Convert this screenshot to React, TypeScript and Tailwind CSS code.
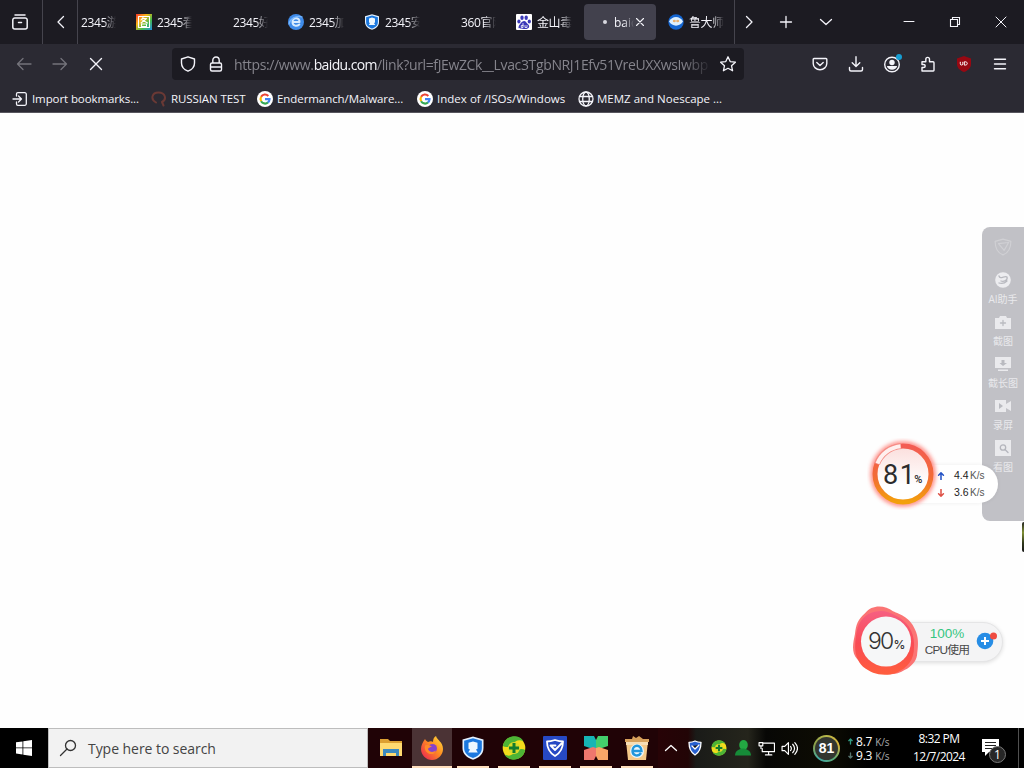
import React from 'react';

const UI = "font-['Open_Sans','Noto_Sans_CJK_SC',sans-serif]";

type IconProps = { className?: string; children: React.ReactNode; box?: string; sw?: number };

function Ico({ className = '', children, box = '0 0 16 16', sw = 1.3 }: IconProps) {
  return (
    <svg viewBox={box} className={`shrink-0 ${className}`} fill="none" stroke="currentColor" strokeWidth={sw} strokeLinecap="round" strokeLinejoin="round">
      {children}
    </svg>
  );
}

function Photos() {
  return (
    <Ico className="size-4" sw={1.1}>
      <defs>
        <linearGradient id="rainbow" x1="0" y1="0" x2="1" y2="1">
          <stop offset="0" stopColor="#f3342b" />
          <stop offset=".35" stopColor="#f9b416" />
          <stop offset=".65" stopColor="#45ba48" />
          <stop offset="1" stopColor="#218fe5" />
        </linearGradient>
      </defs>
      <rect width="16" height="16" stroke="none" fill="url(#rainbow)" />
      <path stroke="#fff" d="M2.500 2.500h11v11h-11zM7 3.500 5 6M6.500 4.500h4L5 9M6.500 6l5 3M5.500 10h5v2.500h-5z" />
    </Ico>
  );
}

function BlueE() {
  return (
    <Ico className="size-4">
      <circle cx="8" cy="8" r="8" fill="#3f8be9" stroke="none" />
      <path stroke="#d7ebff" strokeWidth="2" d="M4.500 8h7C11.500 3 4.500 3 4.500 8c0 4.300 4.500 4.500 6.800 2.500" />
      <path stroke="#78b8ff" d="M1 10C2 5 8 1 14 3" />
    </Ico>
  );
}

function ShieldStar({ className = 'size-4' }: { className?: string }) {
  return (
    <Ico className={className}>
      <path d="M8 .3 15 2.300V8c0 4.300-3.200 6.600-7 7.800C4.200 14.600 1 12.300 1 8V2.300z" fill="#e4f2ff" stroke="none" />
      <path d="M8 1.500 13.900 3.200V8c0 3.600-2.600 5.500-5.900 6.600C4.700 13.500 2.100 11.600 2.100 8V3.200z" fill="#1b78df" stroke="none" />
      <path d="M5 4.500 8 3.600l3 .9v4L10 9l1.200 2H4.800L6 9l-1-.5z" fill="#eef8ff" stroke="none" />
    </Ico>
  );
}

function Paw() {
  return (
    <Ico className="size-4">
      <rect width="16" height="16" rx="1" fill="#fff" stroke="none" />
      <g fill="#3a38b8" stroke="none">
        <ellipse cx="2.900" cy="7.500" rx="1.600" ry="2.100" />
        <ellipse cx="6" cy="3.700" rx="1.700" ry="2.300" />
        <ellipse cx="10.200" cy="3.700" rx="1.700" ry="2.300" />
        <ellipse cx="13.300" cy="7.500" rx="1.600" ry="2.100" />
        <path d="M8 7c2 0 2.500 2 4 3.300C14.500 12.500 13 15.500 8 15s-6.500 0-5-3.500C4.500 9.500 6 7 8 7z" />
      </g>
      <path stroke="#fff" strokeWidth=".8" d="M7 9.500v4H5.300v-2H7M9 11.500v2h2v-2" />
    </Ico>
  );
}

function Master() {
  return (
    <Ico className="size-4">
      <circle cx="8" cy="8" r="7.700" fill="#1466d2" stroke="none" />
      <path d="M1 7.500C4 1.500 12 1.500 15 7.500c-3 5.500-11 5.500-14 0z" fill="#dcefff" stroke="none" />
      <ellipse cx="6.300" cy="7" rx="1.500" ry="1.300" fill="#e9b070" stroke="none" />
      <ellipse cx="9.700" cy="7" rx="1.500" ry="1.300" fill="#e9b070" stroke="none" />
    </Ico>
  );
}

function GoogleG() {
  return (
    <svg viewBox="0 0 16 16" className="size-4 shrink-0">
      <circle cx="8" cy="8" r="8" fill="#fff" />
      <g fill="none" strokeWidth="2.200">
        <path stroke="#ea4335" d="M4.100 5.800A4.500 4.500 0 0 1 11.300 4.900" />
        <path stroke="#fbbc05" d="M4.200 10.300A4.500 4.500 0 0 1 4.200 5.700" />
        <path stroke="#34a853" d="M11 11.400A4.500 4.500 0 0 1 4.100 10.200" />
        <path stroke="#4285f4" d="M8 8.200h4.500A4.500 4.500 0 0 1 10.900 11.500" />
      </g>
    </svg>
  );
}

const tabs: { icon?: React.ReactNode; title: string; active?: boolean }[] = [
  { title: '2345游' },
  { icon: <Photos />, title: '2345看' },
  { title: '2345好' },
  { icon: <BlueE />, title: '2345加' },
  { icon: <ShieldStar />, title: '2345安' },
  { title: '360官网' },
  { icon: <Paw />, title: '金山毒' },
  { title: 'baidu', active: true },
  { icon: <Master />, title: '鲁大师' },
];

function Tab({ icon, title, active }: { icon?: React.ReactNode; title: string; active?: boolean }) {
  if (active) {
    return (
      <div className="w-[76px] shrink-0 px-0.5">
        <div className="flex h-9 w-[72px] items-center rounded bg-[#42414d] pl-[19px]">
          <i className="mr-[7px] size-1 shrink-0 rounded-full bg-[#d8d8df]" />
          <span className="w-5 overflow-hidden pt-px text-[12px] [mask-image:linear-gradient(to_right,#000_50%,transparent)]">{title}</span>
          <Ico className="size-3" box="0 0 12 12" sw={1.1}><path d="m2.500 2.500 7 7m0-7-7 7" /></Ico>
        </div>
      </div>
    );
  }
  return (
    <div className="flex h-9 w-[76px] shrink-0 items-center pl-[10px]">
      <div className="mr-[5px] size-4 shrink-0">{icon}</div>
      <span className="w-[35px] overflow-hidden pt-[2px] text-[12px] tracking-[-0.4px] whitespace-nowrap [mask-image:linear-gradient(to_right,#000_65%,transparent)]">{title}</span>
    </div>
  );
}

function TabStrip() {
  return (
    <div className="flex h-11 items-center bg-[#1c1b22]">
      <div className="flex h-full w-[43px] items-center justify-center border-r border-[#45444d] pr-[2px]">
        <Ico className="size-[18px]" box="0 0 18 18" sw={1.500}>
          <path d="M4 2h10M3.800 5h10.400A2 2 0 0 1 16.200 7v7a2 2 0 0 1-2 2H3.800a2 2 0 0 1-2-2V7a2 2 0 0 1 2-2zM7.500 9.500h3" />
        </Ico>
      </div>
      <div className="flex h-full w-[35px] items-center justify-center border-r border-[#45444d] pl-[2px]">
        <Ico className="size-4"><path d="M10.500 2.500 5 8l5.500 5.500" /></Ico>
      </div>
      <div className="flex w-[656px] overflow-hidden">
        <div className="-ml-7 flex">{tabs.map((t, i) => <Tab key={i} {...t} />)}</div>
      </div>
      <div className="flex h-full w-8 items-center justify-center border-l border-[#45444d] pr-[3px]">
        <Ico className="size-4"><path d="m5.500 2.500 5.500 5.500-5.500 5.500" /></Ico>
      </div>
      <Ico className="ml-[12px] size-4"><path d="M8 2.500v11M2.500 8h11" /></Ico>
      <Ico className="ml-6 size-4"><path d="m2.500 5.500 5.500 5 5.500-5" /></Ico>
      <Ico className="ml-[67px] size-4" sw={1}><path d="M3 7.500h10" /></Ico>
      <Ico className="ml-[30px] size-4" sw={1.100}><path strokeLinejoin="miter" d="M3.500 5.500h7v7h-7zM5.500 5.500v-2h7v7h-2" /></Ico>
      <Ico className="ml-[30px] size-4" sw={1}><path d="m3 3 10 10M13 3 3 13" /></Ico>
    </div>
  );
}

function NavBar() {
  return (
    <div className="flex h-10 items-center bg-[#2b2a33] pl-4">
      <Ico className="size-4 text-[#74737b]"><path d="M15 8H1.500M7 2.500 1.500 8 7 13.500" /></Ico>
      <Ico className="ml-5 size-4 text-[#74737b]"><path d="M1 8h13.500M9 2.500 14.500 8 9 13.500" /></Ico>
      <Ico className="ml-5 size-4" sw={1.400}><path d="m2.500 2.500 11 11m0-11-11 11" /></Ico>
      <div className="ml-[68px] flex h-8 w-[572px] items-center rounded bg-[#1c1b22] pl-2">
        <Ico className="size-4" sw={1.400}><path d="M8 .8 14.500 3v4c0 4-2.800 6.800-6.500 8.200C4.300 13.800 1.500 11 1.500 7V3z" /></Ico>
        <Ico className="ml-3 size-4" sw={1.400}><path d="M4 7h8a1.500 1.500 0 0 1 1.500 1.500v5A1.500 1.500 0 0 1 12 15H4a1.500 1.500 0 0 1-1.500-1.500v-5A1.500 1.500 0 0 1 4 7zM4.800 7V4.200a3.200 3.200 0 0 1 6.400 0V7M3 11h10" /></Ico>
        <div className="ml-[10px] w-[478px] overflow-hidden pt-[2px] text-[14px] leading-7 whitespace-nowrap text-[#85848c] tracking-[-0.36px] [mask-image:linear-gradient(to_right,#000_94%,transparent)]">
          https://www.<span className="text-[#f5f5fa] tracking-[-0.62px]">baidu.com</span>/link?url=fJEwZCk__Lvac3TgbNRJ1Efv51VreUXXwsIwbp
        </div>
        <Ico className="ml-2 size-4" sw={1.300}><path d="m8 .8 2.200 4.800 5.200.6-3.900 3.500 1.100 5.100L8 12.300l-4.600 2.500 1.100-5.100L.6 6.200l5.200-.6z" /></Ico>
      </div>
      <Ico className="ml-[68px] size-4" sw={1.400}><path d="M2 2.500h12a.8.800 0 0 1 .8.800v4.200a6.800 6.200 0 0 1-13.600 0V3.300a.8.800 0 0 1 .8-.8zM4.800 6.500 8 9.500l3.200-3" /></Ico>
      <Ico className="ml-5 size-4" sw={1.400}><path d="M8 .8v9.500M4.200 6.800 8 10.500l3.800-3.700M1.500 11.500v2a1.500 1.500 0 0 0 1.500 1.500h10a1.500 1.500 0 0 0 1.500-1.500v-2" /></Ico>
      <div className="relative ml-[19px] size-[18px]">
        <Ico className="size-[18px]" box="0 0 18 18" sw={1.400}>
          <circle cx="9" cy="9.500" r="7.300" />
          <circle cx="9" cy="7.500" r="2.700" fill="currentColor" stroke="none" />
          <path d="M3.800 11h10.400c-.8 2.500-2.500 3.800-5.200 3.800S4.600 13.500 3.800 11z" fill="currentColor" stroke="none" />
        </Ico>
        <i className="absolute -top-[1px] left-[13px] size-[6px] rounded-full bg-[#169ed3]" />
      </div>
      <Ico className="ml-[19px] size-4" sw={1.400}><path d="M2 14.800V11.500h1.500c2.300 0 2.300-3 0-3H2V5.800h3.800V3.500c0-2.900 3.700-2.900 3.700 0v2.300h3.500a1 1 0 0 1 1 1v7.500a.7.700 0 0 1-.7.700H2z" /></Ico>
      <svg className="ml-5 size-4 shrink-0" viewBox="0 0 16 16">
        <path d="M8 0 15 2.500v5.500c0 4-3 6.500-7 8-4-1.500-7-4-7-8V2.500z" fill="#980812" />
        <path d="M4.300 5.800v2a1.200 1.200 0 0 0 2.500 0v-2M8.300 5.800v3.300h1c2.600 0 2.600-3.300 0-3.300z" fill="none" stroke="#fff" strokeWidth="1" />
      </svg>
      <Ico className="ml-5 size-4" sw={1.400}><path d="M2.500 3.300h11M2.500 8h11M2.500 12.700h11" /></Ico>
    </div>
  );
}

function Bookmarks() {
  return (
    <div className="flex h-[29px] items-center border-b border-[#57565e] bg-[#2b2a33] pt-px pl-3 text-[11.500px] whitespace-nowrap">
      <div className="flex w-[139px] items-center gap-1 tracking-[-0.1px]">
        <Ico className="size-4"><path d="M1 8h8.500M6.500 5l3 3-3 3M4.500 5V3A1.300 1.300 0 0 1 5.800 1.700h7A1.500 1.500 0 0 1 14.300 3.200v9.600a1.500 1.500 0 0 1-1.500 1.500h-7A1.300 1.300 0 0 1 4.500 13v-2" /></Ico>
        Import bookmarks...
      </div>
      <div className="flex w-[106px] items-center gap-1 tracking-[-0.1px]">
        <Ico className="size-4 text-[#6a3935]" sw={2}><path d="M5 11.500C-1 8 1 1.500 7.500 1.500c7 0 8.500 7 3.500 9.500l1.500 3.500" /></Ico>
        RUSSIAN TEST
      </div>
      <div className="flex w-[160px] items-center gap-1 tracking-[-0.07px]"><GoogleG />Endermanch/Malware...</div>
      <div className="flex w-[161px] items-center gap-1 tracking-[0.02px]"><GoogleG />Index of /ISOs/Windows</div>
      <div className="flex items-center gap-[3px] tracking-[0px]">
        <Ico className="size-4"><circle cx="8" cy="8" r="7" /><ellipse cx="8" cy="8" rx="3.300" ry="7" /><path d="M1.500 5.500h13M1.500 10.500h13" /></Ico>
        MEMZ and Noescape ...
      </div>
    </div>
  );
}

const tools: { label: string; art: React.ReactNode }[] = [
  { label: 'AI助手', art: <><circle cx="8" cy="8" r="7.800" fill="#ededf0" stroke="none" /><path stroke="#b8b9bf" d="M4 4c1 4 6-1 8 1 1 3-3 5-6 4M4 11c3 1 6 0 8-2" /></> },
  { label: '截图', art: <><path fill="#eaeaed" stroke="none" d="M0 4h4l1-2h6l1 2h4v11H0z" /><path stroke="#b9bac0" d="M8 6.500v5M5.500 9h5" /></> },
  { label: '截长图', art: <><path fill="#eaeaed" stroke="none" d="M0 1h16v11H0zM3 13.500h10V15H3z" /><path fill="#b9bac0" stroke="none" d="M6.500 4h3v3H12L8 10 4.500 7h2z" /></> },
  { label: '录屏', art: <><path fill="#eaeaed" stroke="none" d="M0 2h11v4l5-3v10l-5-3v4H0z" /><path fill="#b9bac0" stroke="none" d="m4 5 4 3-4 3z" /></> },
  { label: '看图', art: <><path fill="#eaeaed" stroke="none" d="M0 0h16v16H0z" /><circle cx="8" cy="7.500" r="2.700" stroke="#b4b5bc" /><path stroke="#b4b5bc" d="m10 9.500 3 3" /></> },
];

function SidePanel() {
  return (
    <aside className="absolute top-[114px] right-0 flex h-[294px] w-[42px] flex-col items-center rounded-l-lg bg-[#c1c1c6] pt-[11px]">
      <Ico className="size-[18px] text-[#d0d0d4]" sw={1}><path d="M8 1 15 3c0 6-2 10-7 12C3 13 1 9 1 3zM4 5l5 6 4-7M4 5l9-1" /></Ico>
      <div className="mt-4 flex flex-col">
        {tools.map((t) => (
          <div key={t.label} className="flex h-[42px] flex-col items-center">
            <Ico className="size-[16px]">{t.art}</Ico>
            <span className="mt-[6px] text-[10px] leading-[11px] whitespace-nowrap text-[#e9e9ec]">{t.label}</span>
          </div>
        ))}
      </div>
    </aside>
  );
}

function MemoryBall() {
  return (
    <div className="absolute top-[323px] left-[865px] flex h-[76px] w-[136px] items-center">
      <div className="absolute top-[29px] left-[50px] flex h-[38px] w-[83px] flex-col justify-center rounded-r-full bg-white pl-[22px] font-['Liberation_Sans',sans-serif] text-[10px] text-[#333] shadow-[0_0_4px_#0001]">
        {[['M4 10V1M1 4l3-3 3 3', 'text-[#2352c5]', '4.4'], ['M4 0v9M1 6l3 3 3-3', 'text-[#de5045]', '3.6']].map(([d, color, n]) => (
          <div key={n} className="flex h-[17px] items-center">
            <Ico box="0 0 8 10" className={`size-[8px] ${color}`} sw={1.900}><path d={d} /></Ico>
            <span className="ml-[9px] w-4 text-[10.500px] text-[#222]">{n}</span><span className="text-[#555]">K/s</span>
          </div>
        ))}
      </div>
      <svg className="relative size-[76px]" viewBox="0 0 76 76">
        <defs>
          <linearGradient id="heat" x1="0" y1="0" x2="0" y2="1"><stop stopColor="#f35c53" /><stop offset=".55" stopColor="#f26b36" /><stop offset="1" stopColor="#f3a00a" /></linearGradient>
          <linearGradient id="face" x1="0" y1="0" x2="0" y2="1"><stop stopColor="#fbdedc" /><stop offset=".7" stopColor="#fff" /></linearGradient>
          <filter id="soft"><feGaussianBlur stdDeviation="2" /></filter>
        </defs>
        <circle cx="38" cy="38" r="30" fill="none" stroke="#ff5c51" strokeWidth="5" opacity=".75" filter="url(#soft)" />
        <circle cx="38" cy="38" r="28" fill="url(#face)" stroke="url(#heat)" strokeWidth="5" />
        <path d="M12 28A28 28 0 0 1 36 10" fill="none" stroke="#f58e87" strokeWidth="6" />
        <path d="M12.500 27.500A28 28 0 0 1 35.500 10.300" fill="none" stroke="#fff0ee" strokeWidth="4" />
      </svg>
      <div className="absolute inset-y-0 left-[18px] flex items-center pt-[2px] font-['Roboto',sans-serif] text-[27px] text-[#2c2b2c]">
        <span className="tracking-[1.500px]">81</span><span className="mt-[10px] -ml-[2px] text-[11px] font-medium">%</span>
      </div>
    </div>
  );
}

function CpuBall() {
  return (
    <div className="absolute top-[489px] left-[850px] h-[76px] w-[158px]">
      <div className="absolute top-[20px] left-[50px] flex h-[40px] w-[103px] items-center rounded-r-full border border-[#e5e5e6] bg-[#f4f4f5] pl-[23px] shadow-[0_1px_4px_#0002]">
        <div className="flex w-[46px] flex-col items-center font-['Liberation_Sans','Noto_Sans_CJK_SC',sans-serif]">
          <span className="text-[13.500px] leading-[15px] text-[#35c681]">100%</span>
          <span className="pt-px text-[11.800px] leading-[17px] whitespace-nowrap text-[#484849] tracking-[-0.800px]">CPU使用</span>
        </div>
        <svg className="mb-[3px] ml-[6px] size-[21px]" viewBox="0 0 21 21">
          <circle cx="9" cy="11" r="8.300" fill="#278de5" /><path d="M9 7v8M5 11h8" stroke="#fff" strokeWidth="2" /><circle cx="17.500" cy="6" r="3.500" fill="#ef4b40" />
        </svg>
      </div>
      <svg className="relative h-[74px] w-[70px]" viewBox="0 0 70 72" preserveAspectRatio="none">
        <defs><linearGradient id="lava" x1="0" y1="0" x2="0" y2="1"><stop stopColor="#f66082" /><stop offset=".5" stopColor="#f94a54" /><stop offset="1" stopColor="#ff5e3d" /></linearGradient></defs>
        <path d="M15 11C22 2 35 3 43 9c7 3 18 6 23 20 3 8 2 15 1 23-1 6-6 11-12 14-6 4-13 5-20 4-7-1-8-4-14-7C8 59 3 53 3 44c0-4 1-8 2-13 1-9 3-14 10-20z" fill="#fb7474" />
        <path d="M18 12c10-5 19-4 27 1 13 6 20 17 19 31 0 12-6 20-18 25-13 4-24 1-33-6C5 55 4 46 6 33c1-10 5-17 12-21z" fill="url(#lava)" />
        <ellipse cx="36" cy="38.500" rx="25" ry="24.300" fill="#f6f7f8" />
      </svg>
      <div className="absolute top-[24px] left-[18px] flex h-[30px] items-center font-['Inter',sans-serif] text-[23px] font-light tracking-[-1.800px] text-[#333]">
        90<span className="mt-[8px] ml-[1px] text-[12px] font-medium">%</span>
      </div>
    </div>
  );
}

function Plus360({ className = 'size-6' }: { className?: string }) {
  return (
    <Ico box="0 0 24 24" className={className}>
      <circle cx="12" cy="12" r="11.300" fill="#f3dc1b" stroke="none" />
      <path d="M.8 10C3-2 18-2 21.500 5.500 16 3 14 5 11 8 8 11 4 12 .8 10zm22.400 4C21 26 6 26 2.500 18.500 8 21 10 19 13 16c3-3 7-4 10.200-2z" fill="#4db435" stroke="none" />
      <circle cx="12" cy="12" r="6" fill="#d9da28" stroke="none" />
      <path stroke="#137c2d" strokeWidth="3" strokeLinecap="butt" d="M12 7v10M7 12h10" />
    </Ico>
  );
}

const apps: { on?: boolean; bar?: string; art: React.ReactNode }[] = [
  { art: <svg viewBox="0 0 24 24" className="size-6"><path d="M1 3h8l2 2h12v15H1z" fill="#dca032" /><path d="M1 7h22v13H1z" fill="#ffda70" /><path d="M4 13h16v7h-3v-3H7v3H4z" fill="#3d8abf" /></svg> },
  { on: true, bar: 'w-full', art: (
    <svg viewBox="0 0 24 24" className="size-6">
      <defs><linearGradient id="fox" x1="1" y1="0" x2="0" y2="1"><stop stopColor="#ffe43d" /><stop offset=".45" stopColor="#ff8b22" /><stop offset="1" stopColor="#e81958" /></linearGradient></defs>
      <path d="M5 3c1 2 2 2 3 3 2-1 4-1 5 0 0-3 1-5 3-6 1 4 7 6 7 13 0 6-5 11-11 11S1 19 1 13c0-4 2-7 4-10z" fill="url(#fox)" />
      <circle cx="12.500" cy="12.500" r="4.500" fill="#8642cc" /><path d="M5 9.500c3-1 5 0 7 1-2 1-4 1-4 3 2 3 5 3 8 1-2 7-13 3-11-5z" fill="#ff8a2a" />
    </svg>) },
  { bar: 'w-8', art: <ShieldStar className="size-6" /> },
  { bar: 'w-8', art: <Plus360 /> },
  { bar: 'w-8', art: <Ico box="0 0 24 24" className="size-6 text-white" sw={1.800}><rect width="24" height="24" rx="1" fill="#2649c4" stroke="none" /><path d="M12 4c3 1 5 1.500 8 1.500 0 7-2 11-8 14.500-6-3.500-8-7.500-8-14.500C7 5.500 9 5 12 4zM7.500 9.500 12 14l7.500-7.500M7.500 9.500h5" /></Ico> },
  { bar: 'w-8', art: <svg viewBox="0 0 24 24" className="size-6"><path d="M0 0h10l2 4v8L9 13 0 10z" fill="#16b5b5" /><path d="M24 0H14l-2 4v8l3 1 9-3z" fill="#43ce6c" /><path d="M0 24h10l2-4v-8l-3-1-9 3z" fill="#ef776e" /><path d="M24 24H14l-2-4v-8l3-1 9 3z" fill="#f9a567" /></svg> },
  { bar: 'w-8', art: <svg viewBox="0 0 24 24" className="size-6"><path d="M1 5h22l-2 19H3z" fill="#f4c889" /><path d="M0 3h7l1-3 3 2 3-2 4 3h6v3H0z" fill="#d7a05b" /><path d="M1 6h22v3H1z" fill="#f7ddb5" /><circle cx="12" cy="15" r="7" fill="#e9f5fc" /><path d="M7.500 15h9c0-7-9-7-9 0 0 5 6 6 8.500 2" fill="none" stroke="#2196dc" strokeWidth="2.400" /></svg> },
];

function Taskbar() {
  return (
    <footer className="flex h-10 bg-[#160203] text-white">
      <div className="flex w-12 items-center justify-center bg-black">
        <svg viewBox="0 0 16 16" className="size-4" fill="#fff"><path d="M0 2.300 6.500 1.400v6H0zM7.300 1.300 16 0v7.400H7.300zM0 8.200h6.500v6.200L0 13.500zM7.300 8.200H16V16l-8.700-1.300z" /></svg>
      </div>
      <div className="flex w-[320px] items-center border border-[#bdbdbd] bg-[#f2f2f2] pl-[10px] text-[#444]">
        <Ico className="size-[18px] text-[#333]" box="0 0 18 18" sw={1.300}><circle cx="11.500" cy="6.500" r="5" /><path d="m8 10-6.500 6.500" /></Ico>
        <span className="ml-[11px] text-[14px] tracking-[-0.050px]">Type here to search</span>
      </div>
      <div className="flex w-[290px] bg-[#200306] pl-[2px]">
        {apps.map((a, i) => (
          <div key={i} className="flex h-10 w-[41px] shrink-0 flex-col pl-px">
            <div className={`flex h-10 w-10 flex-col items-center ${a.on ? 'bg-[#4b3335]' : ''}`}>
              <div className="flex h-[38px] items-center pt-[2px]">{a.art}</div>
              {a.bar && <i className={`h-0.5 bg-[#ffdfbd] ${a.bar}`} />}
            </div>
          </div>
        ))}
      </div>
      <div className="flex flex-1 items-center bg-[linear-gradient(90deg,#270306_0px,#220506_30px,#1a1b18_38px,#25251c_90px,#070705_108px,#0d0c03_170px,#000_210px)] pl-[5px]">
        <Ico className="size-4"><path d="m2.500 10.500 5.500-5 5.500 5" /></Ico>
        <Ico className="ml-2 size-4 text-white" sw={1.300}><path fill="#2860cf" d="M8 1c2 1 4 1.300 6 1.300 0 5.700-1 9.700-6 12.700C3 12 2 8 2 2.300 4 2.300 6 2 8 1zM5 6l3 3 4-4" /></Ico>
        <Plus360 className="ml-2 size-4" />
        <svg className="ml-2 size-4 shrink-0" viewBox="0 0 16 16"><ellipse cx="8.500" cy="5" rx="4.300" ry="5" fill="#23a842" /><path d="M0 15.500c0-5 5-7 8-7s8 2 8 7z" fill="#168c38" /></svg>
        <Ico className="ml-[7px] size-[17px]" sw={1.100}><path d="M5 3h10.500v8H4V8M10 11v3M7 14h6M1 2.500h3.500v3H1zM2.800 5.500V8" /></Ico>
        <Ico className="ml-[6px] size-[17px]" sw={1.100}><path d="M1 6h2.500L7 2.500v11L3.500 10H1zM9 6q1.500 2 0 4M11 4q3.500 4 0 8M13 2.500q5 5.500 0 11" /></Ico>
        <div className="ml-[15px] flex size-[27px] shrink-0 items-center justify-center rounded-full bg-[conic-gradient(#b8b84a,#d9b33a,#5aa876,#40a8a5,#8aa04b,#b8b84a)]">
          <div className="flex size-[23px] items-center justify-center rounded-full bg-[#333630] font-['Liberation_Sans',sans-serif] text-[14px] font-bold">81</div>
        </div>
        <div className="ml-2 flex w-[60px] flex-col pt-px text-[12px] leading-[14px] tracking-[-0.200px]">
          <div className="flex h-[14px] items-center"><Ico box="0 0 6 8" className="mr-[3px] h-[7px] w-[5px] text-[#329b83]" sw={1.600}><path d="M3 7V1M1 3l2-2 2 2" /></Ico>8.7<span className="ml-[3px] text-[10px] text-[#aaa]">K/s</span></div>
          <div className="flex h-[14px] items-center"><Ico box="0 0 6 8" className="mr-[3px] h-[7px] w-[5px] text-[#56736e]" sw={1.600}><path d="M3 1v6M1 5l2 2 2-2" /></Ico>9.3<span className="ml-[3px] text-[10px] text-[#aaa]">K/s</span></div>
        </div>
        <div className="flex w-[62px] flex-col items-center text-[12px] leading-[18px] tracking-[-0.550px] whitespace-nowrap"><span>8:32 PM</span><span>12/7/2024</span></div>
        <div className="relative ml-[12px] h-7 w-6">
          <svg viewBox="0 0 17 18" className="mt-[5px] h-[18px] w-[17px]"><path d="M0 0h17v13H7l-4 4v-4H0z" fill="#fff" /><path d="M3 3.500h11M3 6.500h11M3 9.500h8" stroke="#222" /></svg>
          <span className="absolute top-[12px] left-[7px] flex size-[17px] items-center justify-center rounded-full border border-[#777] bg-[#272727] text-[12px]">1</span>
        </div>
        <i className="ml-[12px] h-10 w-px bg-[#505050]" />
      </div>
    </footer>
  );
}

export default function App() {
  return (
    <div className={`flex h-[768px] w-[1024px] flex-col overflow-hidden bg-white text-[#f4f4fa] ${UI}`}>
      <header className="shrink-0"><TabStrip /><NavBar /><Bookmarks /></header>
      <main className="relative flex-1 bg-[#fefefe]">
        <SidePanel />
        <MemoryBall />
        <CpuBall />
        <i className="absolute top-[409px] right-0 h-[30px] w-[2px] rounded-l bg-[linear-gradient(#202020,#809034_35%,#30381c_70%,#181818)]" />
      </main>
      <Taskbar />
    </div>
  );
}
